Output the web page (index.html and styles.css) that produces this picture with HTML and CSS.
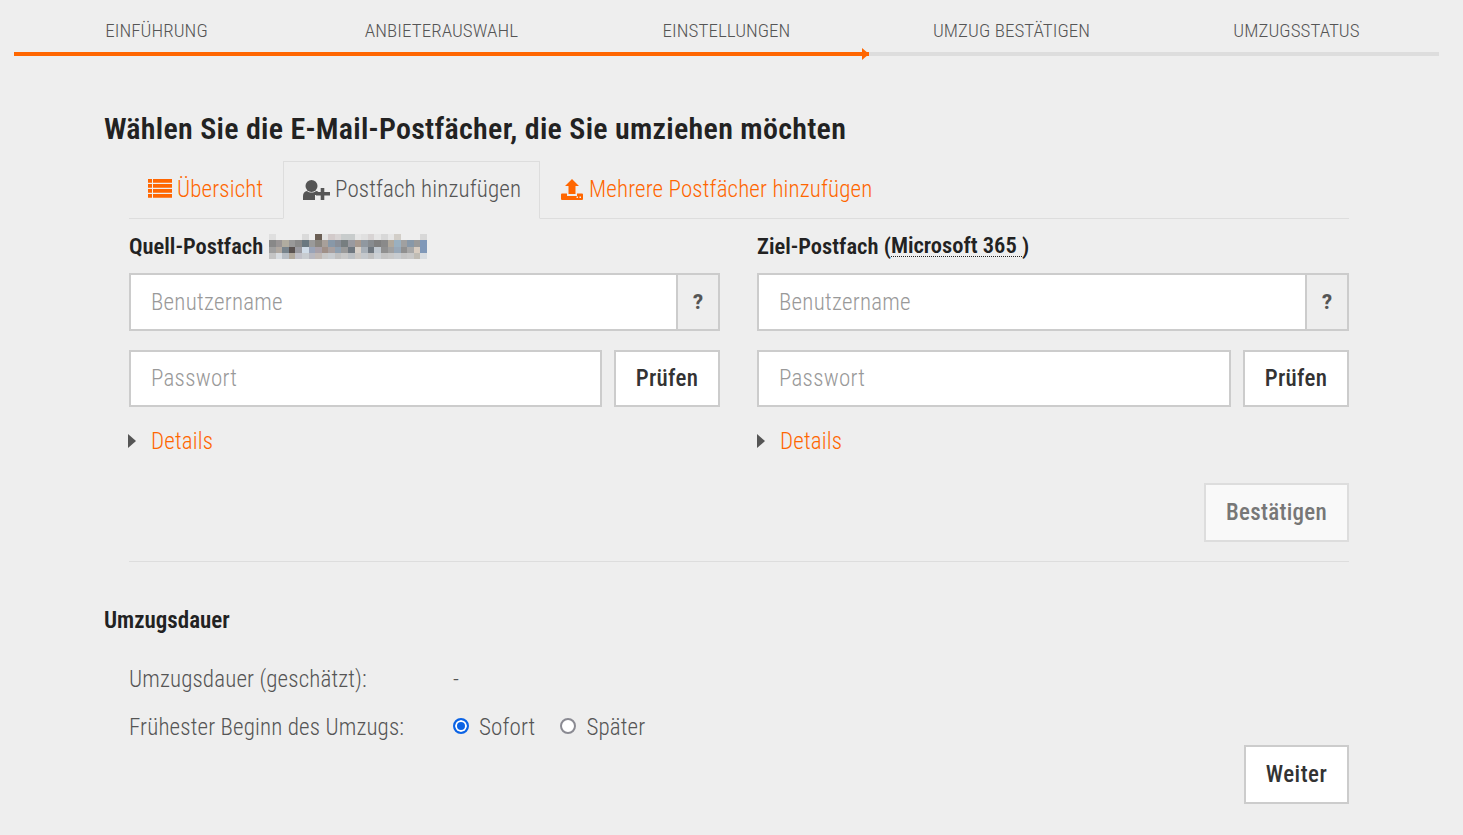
FILE: index.html
```html
<!DOCTYPE html>
<html lang="de">
<head>
<meta charset="utf-8">
<title>Umzug</title>
<link rel="stylesheet" href="styles.css">
</head>
<body>
<nav class="steps">
  <div class="labels">
    <span>EINFÜHRUNG</span><span>ANBIETERAUSWAHL</span><span>EINSTELLUNGEN</span><span>UMZUG BESTÄTIGEN</span><span>UMZUGSSTATUS</span>
  </div>
  <div class="track"><div class="progress"></div></div>
</nav>
<main class="page">
  <h1>Wählen Sie die E-Mail-Postfächer, die Sie umziehen möchten</h1>
  <div class="inner">
    <div class="tabs">
      <a class="tab tab-first"><svg class="ico" width="24" height="19" viewBox="0 0 24 19"><path fill="#ff6600" d="M0 0h4v3.700H0zM5 0h19v3.700H5zM0 5h4v3.700H0zM5 5h19v3.700H5zM0 10h4v3.700H0zM5 10h19v3.700H5zM0 15h4v3.700H0zM5 15h19v3.700H5z"/></svg>Übersicht</a>
      <a class="tab tab-active"><svg class="ico" width="27" height="20" viewBox="0 0 27 20"><circle cx="8.500" cy="6" r="6" fill="#555"/><path fill="#555" d="M0 20v-4c0-3 1.800-4.800 4-5 1.300 1 2.800 1.500 4.500 1.500s3.200-.5 4.500-1.500c1 .1 2 .5 2.700 1.200V15H12v5z"/><path fill="#555" d="M17.700 8h3.600v4h5.700v3.600h-5.700V20h-3.600v-4.400H13V12h4.700z"/></svg>Postfach hinzufügen</a>
      <a class="tab tab-last"><svg class="ico" width="22" height="21" viewBox="0 0 22 21"><path fill="#ff6600" d="M11 0l7 7h-3.500v8h-7V7H4z"/><path fill="#ff6600" d="M0 15.500a1 1 0 0 1 1-1h5v2.500h10v-2.500h5a1 1 0 0 1 1 1V20a1 1 0 0 1-1 1H1a1 1 0 0 1-1-1z"/><rect x="15.500" y="17.500" width="1.500" height="1.500" fill="#eee"/><rect x="18.500" y="17.500" width="1.500" height="1.500" fill="#eee"/></svg>Mehrere Postfächer hinzufügen</a>
    </div>
    <div class="columns">
      <section class="col col-source">
        <div class="col-title">Quell-Postfach<svg class="mosaic" width="158" height="25" viewBox="0 0 24 4" preserveAspectRatio="none" shape-rendering="crispEdges" aria-hidden="true">
<rect x="0" y="0" fill="#dfdfdf"/><rect x="5" y="0" fill="#dadada"/><rect x="7" y="0" fill="#6b5f55"/><rect x="8" y="0" fill="#e4e4e4"/><rect x="9" y="0" fill="#d2caca"/><rect x="10" y="0" fill="#d8d4d4"/><rect x="11" y="0" fill="#c8cccc"/><rect x="12" y="0" fill="#c8cccc"/><rect x="13" y="0" fill="#e6e6e6"/><rect x="14" y="0" fill="#e0e0e0"/><rect x="15" y="0" fill="#d8d4d4"/><rect x="16" y="0" fill="#e6e6e6"/><rect x="17" y="0" fill="#d8d8d8"/><rect x="18" y="0" fill="#e6e6e6"/><rect x="19" y="0" fill="#d2cec8"/><rect x="23" y="0" fill="#d8d8d8"/>
<rect x="0" y="1" fill="#888888"/><rect x="1" y="1" fill="#999595"/><rect x="2" y="1" fill="#b0aca0"/><rect x="3" y="1" fill="#999999"/><rect x="4" y="1" fill="#8a8a8a"/><rect x="5" y="1" fill="#6a7880"/><rect x="6" y="1" fill="#9a9a9a"/><rect x="7" y="1" fill="#8a8680"/><rect x="8" y="1" fill="#a8a09a"/><rect x="9" y="1" fill="#8898a8"/><rect x="10" y="1" fill="#8a8f98"/><rect x="11" y="1" fill="#777e80"/><rect x="12" y="1" fill="#9a9aa0"/><rect x="13" y="1" fill="#a89a90"/><rect x="14" y="1" fill="#9098a0"/><rect x="15" y="1" fill="#888c90"/><rect x="16" y="1" fill="#808080"/><rect x="17" y="1" fill="#8a8a8a"/><rect x="18" y="1" fill="#b0a89c"/><rect x="19" y="1" fill="#9ab0c0"/><rect x="20" y="1" fill="#a0a0a0"/><rect x="21" y="1" fill="#8898a8"/><rect x="22" y="1" fill="#9a9a9a"/><rect x="23" y="1" fill="#8098b8"/>
<rect x="0" y="2" fill="#a0a0a0"/><rect x="1" y="2" fill="#b0a8a0"/><rect x="2" y="2" fill="#78848c"/><rect x="3" y="2" fill="#5a5250"/><rect x="4" y="2" fill="#9a9aa0"/><rect x="5" y="2" fill="#d0dce8"/><rect x="6" y="2" fill="#9aa4b8"/><rect x="7" y="2" fill="#a8a0a8"/><rect x="8" y="2" fill="#a09088"/><rect x="9" y="2" fill="#a8a0a0"/><rect x="10" y="2" fill="#90a0b0"/><rect x="11" y="2" fill="#9a9a9a"/><rect x="12" y="2" fill="#707880"/><rect x="13" y="2" fill="#d8d0c8"/><rect x="14" y="2" fill="#a8b0b8"/><rect x="15" y="2" fill="#707880"/><rect x="16" y="2" fill="#c0c8d0"/><rect x="17" y="2" fill="#909090"/><rect x="18" y="2" fill="#a0a0a0"/><rect x="19" y="2" fill="#98a8b8"/><rect x="20" y="2" fill="#909090"/><rect x="21" y="2" fill="#a8a8a8"/><rect x="22" y="2" fill="#d8ccc0"/><rect x="23" y="2" fill="#8098b8"/>
<rect x="0" y="3" fill="#c4c4c4"/><rect x="1" y="3" fill="#d8dce0"/><rect x="2" y="3" fill="#b8bec4"/><rect x="3" y="3" fill="#b0a89c"/><rect x="4" y="3" fill="#c0c0c8"/><rect x="5" y="3" fill="#c8ccd0"/><rect x="6" y="3" fill="#b8b8c0"/><rect x="7" y="3" fill="#c0b8b4"/><rect x="8" y="3" fill="#c8c8c8"/><rect x="9" y="3" fill="#c8ccd0"/><rect x="10" y="3" fill="#c0c0c0"/><rect x="11" y="3" fill="#c8c8c8"/><rect x="12" y="3" fill="#bcc0c4"/><rect x="13" y="3" fill="#ccc8c4"/><rect x="14" y="3" fill="#c4c8cc"/><rect x="15" y="3" fill="#c0c0c0"/><rect x="16" y="3" fill="#ccd0d4"/><rect x="17" y="3" fill="#c4c4c4"/><rect x="18" y="3" fill="#c8c8c8"/><rect x="19" y="3" fill="#c8ccd0"/><rect x="20" y="3" fill="#c4c4c4"/><rect x="21" y="3" fill="#c8c8c8"/><rect x="22" y="3" fill="#c0bcb4"/><rect x="23" y="3" fill="#d8dce0"/>
</svg></div>
        <div class="field-row"><div class="input-group"><div class="input">Benutzername</div><div class="addon">?</div></div></div>
        <div class="field-row field-row-short"><div class="input">Passwort</div><button class="btn">Prüfen</button></div>
        <div class="details"><svg class="caret" width="8" height="14" viewBox="0 0 8 14"><path fill="#555" d="M0 0l8 7-8 7z"/></svg><a>Details</a></div>
      </section>
      <section class="col col-target">
        <div class="col-title">Ziel-Postfach (<span class="dotted">Microsoft 365 </span>)</div>
        <div class="field-row"><div class="input-group"><div class="input">Benutzername</div><div class="addon">?</div></div></div>
        <div class="field-row field-row-short"><div class="input">Passwort</div><button class="btn">Prüfen</button></div>
        <div class="details"><svg class="caret" width="8" height="14" viewBox="0 0 8 14"><path fill="#555" d="M0 0l8 7-8 7z"/></svg><a>Details</a></div>
      </section>
    </div>
    <div class="confirm"><button class="btn btn-disabled">Bestätigen</button></div>
    <hr class="rule">
  </div>
  <h2>Umzugsdauer</h2>
  <div class="inner">
    <div class="info-row"><span class="info-label">Umzugsdauer (geschätzt):</span><span>-</span></div>
    <div class="info-row"><span class="info-label">Frühester Beginn des Umzugs:</span>
      <span class="radio radio-on"></span><span class="radio-text">Sofort</span>
      <span class="radio"></span><span>Später</span>
    </div>
    <div class="next"><button class="btn btn-next">Weiter</button></div>
  </div>
</main>
</body>
</html>
```
FILE: styles.css
```css
* { box-sizing: border-box; }
html, body { margin: 0; padding: 0; }
body {
  background: #eeeeee;
  color: #555;
  font-family: "Roboto", sans-serif;
  font-stretch: 80%;
  font-weight: 300;
  font-size: 23px;
  letter-spacing: 0.13px;
  height: 835px;
  overflow: hidden;
}
.steps { padding: 0 24px 0 14px; }
.labels { display: flex; height: 52px; align-items: center; padding-top: 9px; }
.labels span { flex: 0 0 285px; text-align: center; font-size: 19px; letter-spacing: 0.05px; color: #555; }
.track { height: 4px; background: #dddddd; position: relative; }
.progress { width: 855px; height: 4px; background: #ff6600; position: relative; }
.progress::after {
  content: ""; position: absolute; right: 0; top: -4px;
  border-left: 7px solid #ff6600; border-top: 6px solid transparent; border-bottom: 6px solid transparent;
}
.page { padding: 0 114px 0 104px; }
h1 { margin: 53px 0 0; height: 52px; font-size: 30px; letter-spacing: 0.27px; line-height: 40px; font-weight: 600; color: #222; }
h2 { margin: 0; padding-top: 46px; height: 93px; font-size: 23px; letter-spacing: 0; line-height: 26px; font-weight: 600; color: #222; }
.inner { margin-left: 25px; width: 1220px; }
.tabs { display: flex; height: 58px; border-bottom: 1px solid #ddd; }
.tab { display: flex; align-items: center; gap: 5px; padding: 0 20px 2px; color: #ff6600; height: 58px; white-space: nowrap; }
.tab-first { width: 154px; padding: 0 0 2px 19px; }
.tab-first .ico { margin-bottom: 1px; }
.tab-active { width: 257px; padding: 0 0 2px 19px; color: #555; border: 1px solid #ddd; border-bottom: 1px solid #eee; }
.tab-active .ico { margin-top: 1px; }
.tab-last { padding-left: 21px; gap: 6px; }
.columns { display: flex; gap: 37px; }
.col-source { flex: 0 0 591px; }
.col-target { flex: 1 1 0; }
.col-title { display: flex; align-items: center; height: 54px; padding-bottom: 1px; font-weight: 600; color: #222; white-space: pre; font-size: 22.5px; letter-spacing: 0; }
.mosaic { margin: 2px 0 0 6px; }
.mosaic rect { width: 1px; height: 1px; }
.dotted { border-bottom: 1px dotted #222; line-height: 22px; }
.field-row { display: flex; gap: 12px; height: 58px; margin-bottom: 19px; }
.field-row-short { height: 57px; margin-bottom: 20px; }
.input-group { display: flex; flex: 1; }
.input {
  flex: 1; height: 100%; background: #fff; border: 2px solid #ccc; color: #999; letter-spacing: 0.25px;
  padding-left: 20px; display: flex; align-items: center;
}
.addon {
  width: 44px; margin-left: -2px; height: 58px; background: #eee; border: 2px solid #ccc;
  display: flex; align-items: center; justify-content: center; font-weight: 800; font-size: 20px; font-stretch: 100%; color: #555;
}
.btn {
  font: inherit; font-weight: 500; letter-spacing: 0.3px; color: #333; background: #fff; border: 2px solid #ccc;
  height: 59px; padding: 0 21px; margin: 0;
}
.field-row .btn { height: 57px; width: 106px; padding: 0; }
.btn-next { width: 105px; padding: 0; letter-spacing: 0.5px; }
.btn-disabled { width: 145px; padding: 0; color: #777; background: #f9f9f9; border-color: #ddd; }
.details { display: flex; align-items: center; gap: 15px; height: 28px; color: #ff6600; }
.col-source .details { margin-left: -1px; }
.confirm { display: flex; justify-content: flex-end; margin-top: 28px; }
.rule { margin: 19px 0 0; border: 0; border-top: 1px solid #ddd; }
.info-row { display: flex; align-items: center; height: 48px; }
.info-label { width: 324px; }
.radio { width: 16px; height: 16px; margin: 0 10px 2px 0; border-radius: 50%; border: 2px solid #8a8a92; background: #fff; }
.radio-on { border: 2px solid #0b63e5; box-shadow: inset 0 0 0 2px #fff; background: #0b63e5; }
.radio-text { margin-right: 25px; }
.next { display: flex; justify-content: flex-end; margin-top: -6px; }
```
